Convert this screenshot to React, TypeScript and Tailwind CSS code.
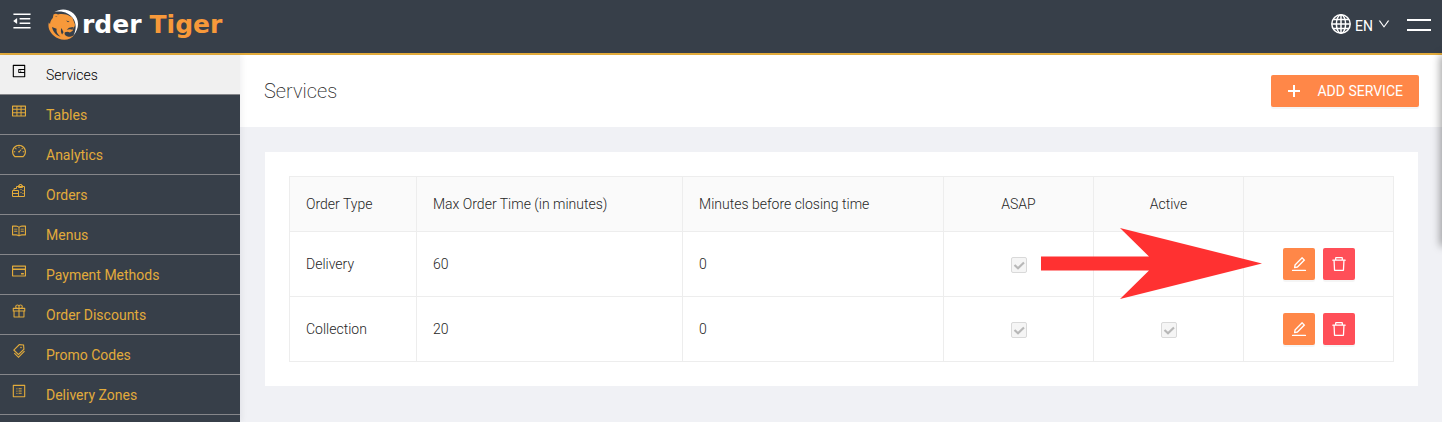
import React from 'react';
import {
  AiOutlineMenuFold,
  AiOutlineWallet,
  AiOutlineTable,
  AiOutlineDashboard,
  AiOutlineRead,
  AiOutlineCreditCard,
  AiOutlineGift,
  AiOutlineTags,
  AiOutlineProfile,
  AiOutlineEdit,
  AiOutlineDelete,
  AiOutlineDown,
} from 'react-icons/ai';

function OrdersIcon() {
  return (
    <svg viewBox="-1 0 16 16" width="16" height="16" fill="none" stroke="currentColor" strokeWidth="1">
      <path d="M4.500 5.500v-2h8v10h-12v-6h6v6M0.500 10.500h6M2 7.500v-2h2.500" />
      <path d="M6.500 4.500v-2h1v-1h2v1h1v2z" />
      <path d="M8.500 6.500h1M10.500 7.500h1M8.500 9.500h1M10.500 10.500h1" />
    </svg>
  );
}

function PlusIcon() {
  return (
    <svg viewBox="0 0 14 14" className="mr-4 size-3.5" stroke="currentColor" strokeWidth="2" aria-hidden="true">
      <path d="M7 1v12M1 7h12" />
    </svg>
  );
}

function GlobeIcon() {
  return (
    <svg viewBox="0 0 20 20" width="20" height="20" fill="none" stroke="currentColor" strokeWidth="1.5">
      <circle cx="10" cy="10" r="9.200" />
      <ellipse cx="10" cy="10" rx="4.600" ry="9.200" />
      <path d="M10 1v18M1 10h18M2.300 5.500h15.400M2.300 14.500h15.400" />
    </svg>
  );
}

function TigerMark() {
  return (
    <svg viewBox="0 0 32 32" width="32" height="32" aria-hidden="true">
      <path d="M6.500 3C12-.5 20-.5 25.500 4.500c5.500 5 6.500 14.500 0 22 2.800-6 3-11.500 0-16.500C21.500 4 14.500 1.500 6.500 3z" fill="#fff" />
      <path
        d="M5.500 5.500c1.500-1.300 3.500-.8 4.500 0 4-.9 9-.3 12 1.700 1.600.5 2.800 1.600 3 3.200l1.700 4.300c.5 1.600 0 3-1.200 3.600l-.8 3.400-2.800 1.800c-1.500-1-3.500-1-5-.2-1 2 .5 4.200 3.500 4.400 2.500 0 4.700-.8 6.300-2.300-3.700 5.100-10.200 6.600-16.200 4.100C3 26.500-.8 19.500.8 13.500L2 15c.2-2.500 1.200-4.500 2.800-6z"
        fill="#f7993a"
      />
      <path
        d="M6.800 8c1-.8 2-.7 2.800 0M18 11.500l3.500 1-1.500.8zM25 18l-4 .7-2.300 2 3.300-.4 2.700.5zM4 18c.9 4.500 4 8.200 8.500 9.700-3-2.500-4.500-5-3.900-8M13.500 19c-1 2-.8 4.500.6 6.500l1.400-2.200z"
        fill="#363e48"
      />
    </svg>
  );
}

const menu = [
  { label: 'Services', icon: <AiOutlineWallet />, active: true },
  { label: 'Tables', icon: <AiOutlineTable /> },
  { label: 'Analytics', icon: <AiOutlineDashboard /> },
  { label: 'Orders', icon: <OrdersIcon /> },
  { label: 'Menus', icon: <AiOutlineRead /> },
  { label: 'Payment Methods', icon: <AiOutlineCreditCard /> },
  { label: 'Order Discounts', icon: <AiOutlineGift /> },
  { label: 'Promo Codes', icon: <AiOutlineTags /> },
  { label: 'Delivery Zones', icon: <AiOutlineProfile /> },
];

const services = [
  { type: 'Delivery', max: 60, closing: 0, pointer: true },
  { type: 'Collection', max: 20, closing: 0, pointer: false },
];

function Check({ label }: { label: string }) {
  return (
    <span className="relative inline-flex size-4 align-middle">
      <input
        type="checkbox"
        defaultChecked
        disabled
        aria-label={label}
        className="size-4 appearance-none rounded-xs border border-[#d9d9d9] bg-[#f5f5f5]"
      />
      <svg viewBox="0 0 16 16" className="pointer-events-none absolute inset-0 size-4" fill="none" stroke="#b8b8b8" strokeWidth="2.200">
        <path d="M3.500 8l3.500 3.200 6-5.700" />
      </svg>
    </span>
  );
}

function Arrow() {
  return (
    <svg viewBox="0 0 221 71" className="pointer-events-none absolute -left-[53px] -top-1 z-10 h-[71px] w-[221px]" aria-hidden="true">
      <path d="M0 28.500h108L79 0l142 35.500L79 71l29-28.500H0z" fill="#ff3131" />
    </svg>
  );
}

export default function App() {
  return (
    <div className="relative flex h-screen flex-col overflow-hidden bg-[#f0f1f5] font-['Roboto',sans-serif] text-sm text-[#262626]">
      <header className="flex h-[55px] shrink-0 items-center border-b-2 border-[#e2ab3b] bg-[#373f49] pr-[11px] pl-[11px] text-white">
        <button type="button" aria-label="Collapse menu" className="-mt-3 text-[22px]">
          <AiOutlineMenuFold />
        </button>
        <a href="#" aria-label="Order Tiger" className="-mt-1 ml-[15px] flex items-center font-['DejaVu_Sans',sans-serif] text-[25px] leading-8 font-bold">
          <TigerMark />
          <span className="ml-0.5">rder</span>
          <span className="ml-2 text-[#f7993a]">Tiger</span>
        </a>
        <button type="button" className="-mt-1.5 ml-auto flex items-center gap-1">
          <GlobeIcon />
          <span className="pt-1">EN</span>
          <AiOutlineDown className="size-3.5" />
        </button>
        <button type="button" aria-label="Open panel" className="-mt-1 ml-4 flex w-6 flex-col gap-2">
          <span className="h-0.5 bg-white" />
          <span className="h-0.5 bg-white" />
        </button>
      </header>

      <div className="flex min-h-0 flex-1">
        <nav className="relative w-60 shrink-0 bg-[#373f49] shadow-[2px_0_6px_rgba(0,21,41,0.06)]">
          <ul>
            {menu.map((item) => (
              <li key={item.label} className="border-b border-[#85868a]">
                <a
                  href="#"
                  className={
                    item.active
                      ? 'flex h-[39px] items-center bg-[#f0f0f0] pl-[11px] font-light text-black'
                      : 'flex h-[39px] items-center pl-[11px] text-[#e2ab3b]'
                  }
                >
                  <span className="mb-2 w-[35px] text-base">{item.icon}</span>
                  {item.label}
                </a>
              </li>
            ))}
          </ul>
        </nav>

        <main className="min-w-0 flex-1">
          <div className="flex h-[72px] items-center justify-between bg-white pr-[23px] pl-6">
            <h1 className="text-xl font-extralight">Services</h1>
            <button type="button" className="flex h-8 items-center rounded-xs bg-[#ff8748] px-4 text-white shadow-[0_2px_0_rgba(0,0,0,0.04)]">
              <PlusIcon />
              ADD SERVICE
            </button>
          </div>

          <section className="mt-[25px] mr-6 ml-[25px] bg-white p-6">
            <table className="w-full table-fixed border-collapse font-light">
              <colgroup>
                <col className="w-[11.5%]" />
                <col className="w-[24.1%]" />
                <col />
                <col className="w-[150px]" />
                <col className="w-[150px]" />
                <col className="w-[150px]" />
              </colgroup>
              <thead className="bg-[#fafafa]">
                <tr className="h-[55px] text-left [&>th]:border [&>th]:border-[#ededed] [&>th]:px-4 [&>th]:font-light">
                  <th>Order Type</th>
                  <th>Max Order Time (in minutes)</th>
                  <th>Minutes before closing time</th>
                  <th className="text-center">ASAP</th>
                  <th className="text-center">Active</th>
                  <th aria-label="Actions" />
                </tr>
              </thead>
              <tbody>
                {services.map((s) => (
                  <tr key={s.type} className="h-[65px] [&>td]:border [&>td]:border-[#ededed] [&>td]:px-4">
                    <td>{s.type}</td>
                    <td>{s.max}</td>
                    <td>{s.closing}</td>
                    <td className="text-center">
                      <Check label={`${s.type} ASAP`} />
                    </td>
                    <td className="relative text-center">
                      <Check label={`${s.type} active`} />
                      {s.pointer && <Arrow />}
                    </td>
                    <td>
                      <div className="flex justify-center gap-2 text-lg text-white">
                        <button type="button" aria-label={`Edit ${s.type}`} className="flex size-8 items-center justify-center rounded-xs bg-[#ff8748] shadow-[0_2px_0_rgba(0,0,0,0.04)]">
                          <AiOutlineEdit />
                        </button>
                        <button type="button" aria-label={`Delete ${s.type}`} className="flex size-8 items-center justify-center rounded-xs bg-[#ff4f58] shadow-[0_2px_0_rgba(0,0,0,0.04)]">
                          <AiOutlineDelete />
                        </button>
                      </div>
                    </td>
                  </tr>
                ))}
              </tbody>
            </table>
          </section>
        </main>
      </div>

      <aside className="absolute top-[55px] left-full h-[191px] w-64 shadow-[-2px_0_8px_rgba(0,0,0,0.35)]" />
    </div>
  );
}
